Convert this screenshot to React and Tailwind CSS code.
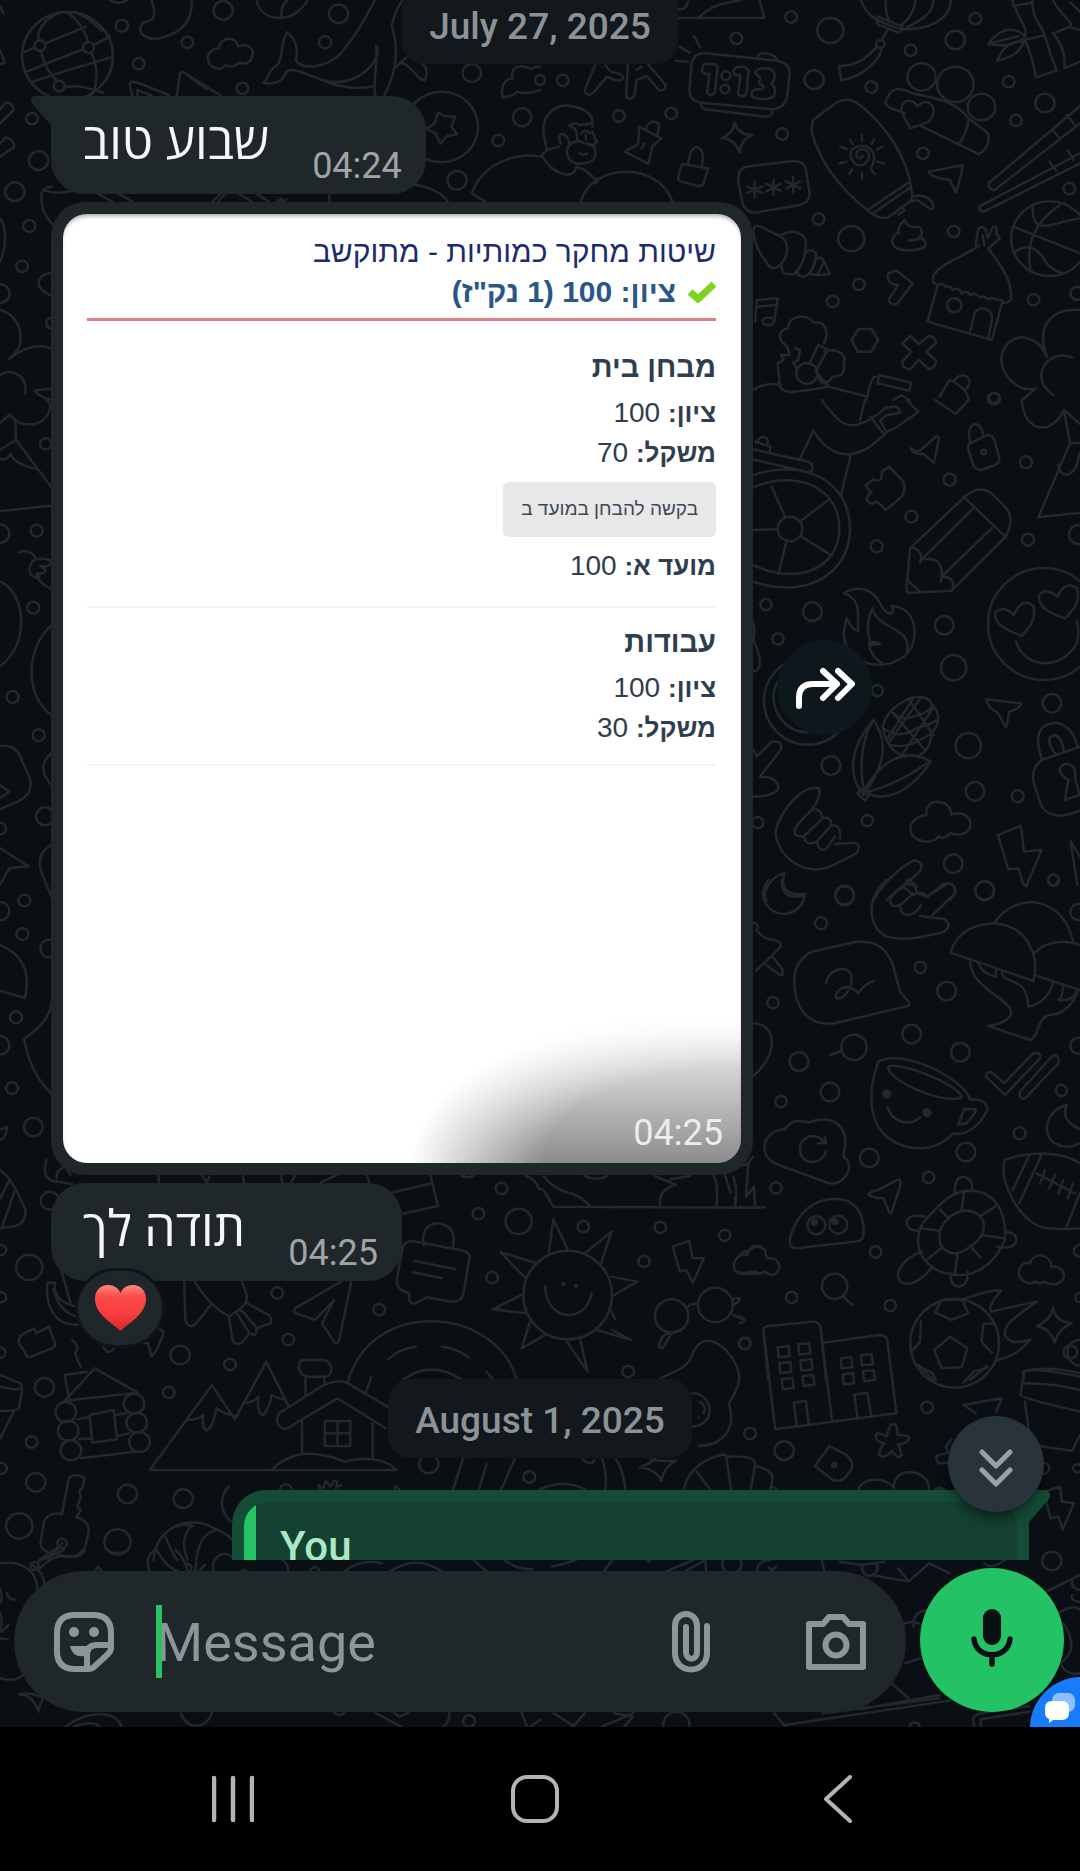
const DOODLES = [
  {
    at: 'scale(.3444 .3333)',
    circles: [
      [196, 168, 132], [116, 137, 16], [257, 143, 16], [172, 258, 16], [354, 77, 18], [403, 191, 17], [544, 127, 17], [648, 31, 28],
      [944, 127, 18], [983, 42, 28], [704, 265, 17], [1370, 219, 27], [1282, 381, 106], [1516, 352, 27], [1447, 421, 17], [1327, 541, 28],
      [93, 356, 17], [112, 482, 28], [43, 575, 28], [85, 678, 18], [64, 799, 17], [0, 881, 28], [150, 969, 16],
    ],
    d: 'M72 155L102 142M132 130L250 80M78 215L160 180L242 148M272 135L318 110M96 245L205 208L322 172M112 122C105 85 140 50 175 38M118 152C128 190 140 220 165 243M188 262C240 250 280 275 300 278M255 128C250 90 220 55 195 36M265 158C290 210 280 270 262 290M215 36C260 50 280 80 296 92M440 0C460 60 440 62 415 68C390 100 430 130 480 110C540 90 560 50 556 0M320 0Q345 18 370 0M745 0C755 60 830 70 870 30Q890 8 893 0M818 50Q812 20 835 0M625 204C590 190 600 145 635 145C640 110 685 105 692 140C720 125 740 150 732 170C725 195 705 192 695 188C680 200 665 202 655 195Q640 212 625 204M765 248C785 235 775 210 800 200C825 180 810 140 833 97C865 120 865 165 858 180C880 215 950 200 990 160C1030 110 1060 60 1088 0M765 248C800 255 820 245 828 222C840 195 880 220 935 240C980 255 1050 245 1090 180Q1102 150 1092 138M935 240C980 262 1040 270 1085 258M1092 140C1100 190 1080 240 1090 288M1168 0Q1140 50 1138 80C1160 150 1150 220 1115 288M1145 205L1180 172M1165 190C1195 190 1205 240 1234 240C1245 210 1235 190 1208 180M385 288C370 240 375 240 410 252L490 285M400 288L398 270L440 286M513 288L522 222Q530 210 545 225L640 286M540 222L600 268M1272 338L1290 348L1322 350L1310 380L1328 402L1298 408L1278 432L1265 400L1238 386L1262 370ZM0 18L10 40M0 150L14 188L0 192M0 330L15 308Q35 305 40 330L0 370M0 430L18 412Q42 420 42 440L0 470M150 560C110 560 120 600 125 630Q138 660 158 678M130 572Q170 585 220 570M285 582L325 604M345 582L385 604M695 582L730 604M745 582L780 604M618 604L640 582M635 604L652 582M805 600L812 606L818 596L824 606L832 598M955 582L957 604M1205 555C1250 560 1290 585 1300 605M1370 580C1400 490 1500 455 1568 470M1370 580L1408 604M1460 292C1450 255 1470 235 1490 235C1475 200 1520 190 1540 208C1550 200 1568 200 1568 200M1460 292Q1490 290 1500 275Q1530 285 1568 270M0 655C20 680 20 740 0 785M150 818C100 825 100 870 148 885M0 930C60 945 70 1020 52 1048Q40 1065 25 1078M35 1072Q90 1025 150 1045M0 1125Q30 1105 60 1130Q80 1155 72 1180M100 1172L150 1166M100 1172Q120 1195 150 1200',
  },
  {
    at: 'translate(540 0) scale(.3444 .3333)',
    circles: [
      [729, 51, 17], [843, 91, 38], [570, 115, 17], [66, 241, 17], [229, 348, 17], [381, 340, 17], [796, 239, 28], [703, 402, 17], [962, 261, 17],
      [1076, 151, 17], [1206, 120, 28], [1264, 56, 17], [1361, 245, 17], [1466, 309, 28], [1382, 361, 17], [1112, 460, 17], [1108, 231, 41], [1206, 253, 53],
      [1282, 321, 40], [1537, 566, 17], [1480, 716, 112], [809, 657, 17], [904, 716, 38], [1201, 694, 17], [926, 853, 17],
      [850, 904, 17], [1433, 899, 17], [1203, 916, 21], [775, 1120, 31], [540, 227, 13], [537, 267, 13], [988, 132, 12], [0, 240, 14], [1318, 1194, 14], [1560, 880, 20],
    ],
    d: 'M402 54L652 54L637 0M460 54C500 10 540 10 585 0M402 28Q425 30 430 5M395 182L430 185M405 140L435 158M447 108L465 142M480 160L688 182Q725 188 725 220L718 290Q710 325 675 328L465 308Q432 300 434 270L440 190Q448 158 480 160M630 172Q635 155 665 162Q688 168 686 182M470 308Q465 325 480 328L655 350Q675 350 676 330M470 210Q472 188 490 192L505 192Q518 195 515 210L508 275Q500 292 485 280L492 222Q475 225 470 210M562 215Q565 196 590 200Q608 205 605 220L600 278Q590 298 575 282L582 225Q565 230 562 215M625 220C630 200 675 200 680 220Q685 240 672 250Q690 270 678 290Q650 305 615 290Q610 272 628 268L645 268Q652 262 645 255Q630 250 640 240Q640 230 625 220M160 194L130 270Q135 295 155 278L195 230Q230 250 242 235Q240 220 205 215L190 196M255 194L250 290Q260 305 275 285L280 240L310 228L345 270Q365 275 365 255L315 195M280 210L295 200M10 400C5 340 50 310 90 318Q160 330 152 380M10 400L20 450L5 465C20 500 60 530 90 522Q105 515 105 500M20 450L55 440M60 432C45 390 80 395 85 430L108 425M85 378Q110 380 108 425M85 378Q95 365 115 375L152 370M120 400Q130 385 145 400M133 405L133 418M152 395L165 425Q155 440 140 435M78 455C80 425 110 418 130 430C165 430 165 460 155 480C120 500 80 495 78 455M115 460Q125 468 137 460M105 500L130 510L168 543M168 543L160 550M118 605C150 490 340 480 385 605M307 388C315 355 350 360 345 385L340 408M288 380L352 415L326 440L315 492L247 455L285 432ZM295 445L304 430M412 492L488 505L475 550Q470 560 455 557L410 545Q398 540 402 530ZM430 494Q435 440 458 442Q480 450 470 500M565 367Q575 405 617 405Q585 415 580 458Q565 415 528 415Q562 400 565 367M600 500L735 483Q768 482 772 510L783 580Q782 608 755 615L625 638Q595 635 588 610L575 540Q575 505 600 500M623 545L623 592M602 560L645 578M602 578L645 560M678 540L678 585M658 552L698 572M658 574L698 552M735 532L735 577M714 544L755 565M714 566L755 544M793 360L860 308Q890 290 920 308C1000 370 1070 470 1080 580Q1085 600 1060 615L1010 652Q990 660 960 638C850 550 810 470 790 400Q788 375 793 360M955 628L1070 548M968 640L1078 560M1080 590Q1125 580 1140 610Q1145 635 1130 625L1095 600L1078 604M1030 640L1050 620L1058 632L1040 645M935 405L935 423M935 518L935 535M872 440L890 447M900 420L908 432M970 418L963 432M995 440L978 448M870 490L890 485M980 485L998 490M898 522L906 508M972 522L962 508M937 468Q930 480 920 470Q915 450 935 448Q960 450 955 475Q945 500 920 495Q895 475 905 450Q930 428 958 445Q980 470 962 500M932 0C950 60 1000 70 1050 88C1130 90 1190 60 1193 0M982 50Q970 65 985 75L1040 98Q1055 95 1052 80L982 50M1015 65Q1000 30 1005 0M1048 78Q1090 40 1090 0M1065 82Q1145 45 1142 0M1008 92L992 122M868 198Q930 200 978 140M868 198L875 240C930 235 985 185 993 145M1060 340C1040 330 1000 325 1003 305C1020 260 1040 260 1080 280C1150 295 1200 300 1245 355L1300 400Q1310 440 1275 463L1110 380M1245 355Q1240 400 1218 430M1075 385C1060 350 1035 330 1060 305Q1085 295 1095 320Q1125 290 1143 325C1145 370 1115 370 1075 385M1375 18L1372 0M1375 18L1428 8L1430 0M1378 18C1400 80 1420 80 1405 120L1465 106C1455 70 1430 60 1430 10M1410 125Q1430 170 1440 232L1500 212Q1480 160 1465 106M1490 0C1510 50 1550 60 1540 80L1490 100M1490 100Q1530 150 1522 205L1568 185M1405 105C1370 75 1330 90 1302 132Q1360 145 1405 115M1310 130L1390 108M1405 125Q1350 120 1328 182Q1390 170 1405 125M1540 8L1568 35M1568 90L1540 82M1568 318L1302 550Q1302 570 1320 570L1568 370M1568 460L1275 620Q1275 640 1295 632L1568 490M1488 388L1508 415M1530 345L1555 378M1480 485L1498 512M1532 452L1550 480M1430 620C1430 680 1450 690 1520 665L1568 655M1375 680L1568 760M1510 615C1430 670 1410 740 1425 815M1380 755Q1430 720 1465 780Q1480 810 1520 820M1128 515L1228 495Q1225 520 1208 578L1190 540Q1140 535 1128 515M620 690Q622 670 645 682L700 710C750 750 680 840 660 790Q620 740 620 690M700 705C750 680 780 710 770 745C770 790 740 830 725 822Q700 825 702 800M775 755Q790 745 802 760C800 800 780 830 765 830Q750 830 745 815M805 775Q815 768 825 785L805 825L785 822M825 785L842 822L805 825M1060 660Q1065 685 1095 680C1115 685 1110 710 1100 712Q1125 720 1118 740Q1080 760 1035 745C1010 725 1030 700 1042 700Q1035 680 1060 660M1070 722L1098 718M1010 835Q1005 815 1035 812L1082 850L1038 910Q1020 920 1012 900L1040 855Q1015 855 1010 835M1265 735L1272 690Q1280 672 1295 690L1300 715L1315 682Q1330 672 1325 700L1335 715L1302 745M1290 735L1285 705M1275 737C1230 770 1165 790 1143 825Q1135 850 1155 855Q1170 845 1175 860Q1190 855 1200 870Q1215 860 1225 880Q1240 870 1250 885Q1265 875 1275 892Q1290 885 1300 898Q1315 890 1325 900Q1340 895 1345 908Q1365 910 1368 895C1370 840 1340 800 1302 745M1155 855L1125 965L1312 1020L1342 908M1248 998L1262 940Q1275 918 1300 930Q1315 940 1312 960L1302 1012M630 900L690 895L682 950Q682 975 665 975Q640 975 648 958Q655 950 675 955M630 920L688 915M630 900L625 965M905 1020L925 987L962 987L982 1020L962 1055L922 1055ZM1052 1030L1075 1008L1100 1032L1128 1008Q1150 1010 1150 1028L1122 1056L1150 1082Q1148 1105 1130 1108L1100 1080L1075 1108Q1050 1105 1052 1085L1078 1056ZM718 1040C680 1010 700 990 720 985C720 950 770 935 795 968C830 960 840 1000 825 1030M825 1055C870 1040 890 1070 882 1090Q890 1130 850 1130C820 1170 810 1140 808 1125M718 1040L725 1065L700 1065L708 1080L690 1090L695 1140Q690 1180 740 1175Q790 1170 840 1160L800 1115L835 1050L808 1035L785 1085M740 1045L755 1050L750 1080L735 1088L745 1105M620 1168Q660 1145 700 1155M830 1158L950 1190M985 1125L1078 1148L1072 1172L980 1150ZM975 1130Q960 1130 948 1200M1025 1200L1050 1185L1072 1200M1160 1190L1190 1140Q1240 1165 1245 1200M1200 1145C1220 1115 1250 1125 1247 1150Q1240 1170 1230 1168M1400 1165C1310 1120 1330 1015 1400 1012Q1440 1020 1455 1040L1472 1070C1440 980 1480 925 1568 930M1400 1165Q1430 1170 1440 1165L1400 1200M1545 1072C1500 1055 1460 1080 1455 1125Q1455 1160 1490 1185',
  },
  {
    at: 'translate(740 400) scale(.3333)',
    circles: [
      [858, 187, 18], [629, 239, 18], [514, 350, 18], [410, 439, 18], [864, 419, 18], [613, 676, 28], [641, 803, 38], [217, 635, 28], [78, 614, 17], [114, 717, 17],
      [412, 872, 17], [685, 1037, 38], [705, 1174, 28], [833, 1189, 18], [936, 910, 28], [273, 1097, 28], [382, 1262, 17], [640, 1391, 28], [734, 1472, 28], [941, 1441, 17],
      [314, 1488, 28], [53, 1268, 17], [912, 672, 168], [150, 387, 37], [203, 903, 131], [1015, 404, 28], [216, 803, 6], [278, 964, 6], [731, 156, 7], [762, -4, 18],
    ],
    d: 'M38 226C200 170 330 250 330 387C330 520 200 600 38 545M38 262C180 205 300 270 298 387C298 500 180 560 38 495M95 260L136 352M265 300L183 362M38 390L112 388M140 423L115 522M182 408L275 467M38 148L205 185Q225 195 212 218L38 178M45 125L92 140L88 155M52 128Q55 108 75 112Q88 118 82 136M178 180L220 92C260 160 320 185 390 140L438 100M332 165L302 290M245 0C290 60 310 80 350 75Q400 60 440 20M375 0L360 60M390 50L430 100M440 25Q475 10 480 38L440 45L420 62L440 95L465 85L535 35L500 0M585 0L648 42L685 0M512 145Q520 155 540 152L590 108Q600 110 595 125L582 188L550 162Q520 165 512 145M690 125Q680 75 708 72Q728 80 730 108M690 130L740 105Q760 105 765 125L778 175Q778 190 765 195L725 210Q705 208 700 195L684 145Q683 135 690 130M376 258L400 238Q425 250 425 225L425 215L448 200L490 245Q500 270 485 290L438 330L412 305Q385 320 380 295Q385 280 395 278ZM680 285Q720 255 755 280L800 325Q825 365 795 412L635 572L505 578Q498 575 500 560L510 445ZM670 290L798 412M515 442Q545 450 545 478L700 325M552 478Q610 470 605 530L755 385M545 478L540 488M605 530L603 545M605 530Q640 530 640 555Q638 570 635 572M502 540L540 575M845 0C850 70 890 90 925 80Q955 65 972 30L1020 72M972 30L990 130L895 352L1020 338M990 130L1020 128M955 195C960 240 1010 235 1018 160M845 708C800 690 755 670 768 635Q790 615 822 645Q845 590 880 618C890 660 870 680 845 708M975 655C930 640 890 620 898 585Q915 560 952 590Q975 540 1012 565C1022 610 1000 630 975 655M828 725C850 800 960 820 1010 730Q1020 700 1010 662M312 580C350 555 400 565 420 610C440 650 470 650 455 618C540 620 540 740 490 770C440 810 350 800 320 740C300 700 320 670 320 655Q340 695 355 692C350 650 370 600 312 580M398 625C380 660 380 700 395 735L420 732Q415 725 388 725C385 760 410 780 430 792M398 625C410 690 520 680 500 755M38 665Q48 690 40 720Q70 785 55 805Q50 820 38 810M165 810C100 820 80 900 125 960Q165 1010 245 992M195 895L215 940Q230 955 240 935L215 880M400 960C330 1040 320 1130 372 1185C430 1100 450 1030 400 960M400 960C360 1020 360 1120 372 1170M372 1175C420 1080 500 1040 572 1085C510 1180 430 1210 372 1175M385 1175Q480 1150 560 1090M352 1180L372 1160L390 1180L375 1202ZM428 980C440 930 480 910 508 895Q560 880 578 915C600 940 600 970 575 1000Q570 1050 540 1065M428 980Q440 1050 485 1065M455 935Q490 965 520 950Q560 940 575 920M430 985Q480 1020 530 985Q570 975 590 960M450 1035Q500 1045 540 1020Q560 1010 575 1000M460 940L555 1050M508 900L580 1005M440 1020L520 895M490 1060L578 925M445 1030L545 890',
  },
  {
    at: 'translate(740 400) scale(.3333) ',
    circles: [],
    d: 'M38 1048Q45 1055 50 1070L95 1025Q130 1020 122 1050L60 1130Q115 1130 115 1165Q105 1190 38 1190M738 898L845 910Q840 925 808 935Q800 980 798 982L775 940Q745 925 738 898M905 1075C880 1000 900 970 950 968Q1000 980 1012 1040M945 1060Q910 1010 945 1005Q965 1010 972 1055M1020 1040L905 1080Q870 1110 882 1150L905 1220Q930 1255 980 1245L1020 1232M975 1200L985 1140Q940 1110 975 1092Q1010 1090 1005 1130L1018 1185ZM237 1165C180 1150 100 1260 108 1310C120 1370 190 1430 270 1400L350 1360Q365 1330 340 1328L285 1332M237 1165Q245 1190 215 1230M215 1230Q240 1220 248 1255Q270 1245 275 1275Q305 1275 300 1315M215 1230C170 1270 140 1310 190 1310L248 1255M190 1310Q200 1340 230 1325L275 1275M230 1325Q240 1360 260 1345L285 1310M560 1245C500 1250 490 1320 560 1325Q585 1325 595 1310Q615 1320 630 1300C700 1320 710 1250 660 1240Q640 1240 635 1245C630 1190 550 1195 560 1245M774 1305L843 1278L852 1355L905 1350L860 1455Q855 1462 850 1450L835 1405L805 1408ZM992 1325L1020 1370M992 1325L1012 1455M133 1420C90 1430 65 1480 80 1500M133 1420Q115 1490 195 1482L190 1500M400 1500Q450 1420 520 1382Q560 1385 535 1420L490 1455M490 1455Q530 1445 530 1480L560 1490L625 1450Q650 1455 645 1480L630 1500M440 1500L490 1455',
  },
  {
    at: 'translate(740 880) scale(.3333)',
    circles: [
      [314, 45, 28], [734, 32, 28], [243, 130, 18], [541, 262, 17], [620, 333, 28], [99, 368, 17], [515, 462, 28], [342, 502, 38], [177, 545, 28], [661, 517, 28],
      [270, 636, 28], [123, 665, 17], [964, 631, 17], [839, 760, 18], [678, 816, 28], [388, 834, 28], [108, 924, 17], [566, 892, 17], [229, 1036, 27], [295, 1034, 27],
      [407, 1116, 17], [155, 1252, 17], [284, 1219, 38], [451, 1277, 17], [15, 1390, 17], [644, 1390, 133], [1015, 96, 24], [1015, 497, 24], [1020, 1112, 18], [1020, 1418, 38], [1020, 1253, 14],
    ],
    dots: [[440, 642, 13], [561, 698, 13], [223, 1027, 10], [285, 1025, 10]],
    d: 'M85 0C50 50 80 100 135 102Q185 95 195 45Q125 65 125 0M440 0C380 50 380 140 440 170C500 185 550 170 605 158Q640 140 615 118L540 108M578 105L645 40Q648 5 610 12L562 50Q545 30 520 45L490 20M490 20Q450 45 450 65Q455 85 480 75L520 40M480 75Q480 105 505 105Q530 100 543 75M500 0Q520 5 530 20M845 0Q850 20 860 18L865 0M925 0Q930 18 945 18L955 0M215 215L350 185C430 180 450 230 460 260L480 335L508 368Q512 378 495 380L285 430C200 440 160 380 163 290Q170 240 215 215M258 310C265 260 340 250 335 300C330 350 285 370 288 345C295 320 330 310 355 340Q375 310 400 303M38 128Q60 130 50 150Q70 180 105 180Q130 190 118 205L48 272M75 252L120 285Q135 285 125 265L98 232M38 430C110 430 120 520 38 590M272 525L305 513M632 218C660 110 830 100 870 200Q895 240 880 303ZM762 130C830 30 970 50 1000 185M885 218C920 180 980 180 1020 195M888 287L1020 330M690 243C690 330 830 360 812 405Q800 430 745 438L870 480C900 470 890 410 930 405Q990 400 1015 330M715 250Q730 285 768 290L768 265M785 275C790 320 860 280 865 380Q920 370 940 308M968 318Q970 350 955 360Q1000 365 1012 330M738 590Q740 570 760 580L792 610L880 520Q905 515 900 535L795 645ZM840 635Q835 650 848 656Q860 655 865 645L955 550Q960 525 940 525ZM415 545Q470 515 590 570Q680 620 690 658Q740 655 742 690Q700 770 640 760C560 840 450 800 415 740C380 680 395 600 415 545M445 560C480 540 690 630 660 655C600 670 440 600 445 560M672 688L708 688Q710 695 680 730L655 735ZM443 680C455 730 510 740 540 712M135 748C60 750 50 840 125 858L260 908C300 920 340 880 322 840Q305 830 312 815C330 740 280 700 205 728Q160 710 135 748M258 815C245 860 180 855 180 808C180 765 230 755 255 788M255 772L258 790L235 790M980 675C920 690 900 760 945 790Q980 810 1020 790M980 675Q960 720 1020 748M795 840C860 815 960 810 1020 850M795 840C770 900 850 1050 930 1045Q980 1050 1020 1045M868 826L818 930M905 824L838 970M1020 940L980 1040M890 880L1005 940M915 870L900 912M945 885L928 925M970 900L955 940M998 912L983 955M385 943Q390 935 415 930L475 898Q485 900 480 920L455 998Q450 1005 445 990L430 955Q395 955 385 943M0 860L25 850L18 950L42 920L45 982M0 982L75 982M25 850L38 830M150 1075C170 1000 220 950 300 958C360 965 375 1020 370 1070Q365 1085 345 1085L170 1105Q145 1105 150 1075M545 1035C620 940 660 930 700 932C780 940 800 1020 795 1080C760 1160 700 1190 650 1185C570 1180 510 1120 545 1035M630 1010Q670 980 710 1000C750 1030 730 1075 690 1100Q640 1140 605 1100C590 1070 600 1035 630 1010M672 935L665 990M600 988L628 1018M765 980L720 1010M540 1045L598 1052M725 1065L790 1075M560 1140L605 1103M645 1180L653 1120M722 1132L690 1098M645 945Q640 890 672 890Q705 900 693 935M555 1010Q500 1000 500 1030Q505 1055 540 1052M795 1055Q835 1060 828 1085Q820 1110 770 1100M545 1115C480 1140 455 1190 490 1210Q530 1220 578 1160M632 1180Q630 1220 658 1220Q685 1215 683 1175M0 1125Q15 1110 25 1115Q40 1085 75 1110L80 1135C120 1130 130 1170 100 1185Q85 1185 75 1175Q60 1185 45 1175Q20 1190 0 1175M855 1205C820 1190 840 1140 870 1150C880 1115 930 1120 935 1160C975 1155 985 1200 950 1212Q925 1215 915 1205Q900 1215 885 1205Q870 1215 855 1205M310 1250L337 1275M585 1298L605 1260Q640 1255 668 1262L685 1300L635 1320ZM630 1370L682 1405L665 1462L605 1465L583 1410ZM543 1325L540 1385L515 1415M762 1330L730 1332L725 1385L755 1418M665 1258C700 1250 740 1230 783 1232Q740 1280 755 1295Q840 1275 890 1265C830 1310 790 1330 795 1365Q810 1400 872 1378Q830 1430 770 1440M535 1455L580 1500M742 1458L690 1500M940 1283Q945 1325 995 1330Q955 1345 945 1388Q930 1345 890 1338Q930 1325 940 1283M850 1475Q920 1455 1020 1480M850 1475L850 1500M0 1310Q20 1320 10 1325L0 1330M70 1350L85 1500M70 1350Q70 1340 85 1338L220 1325Q238 1325 242 1345L258 1500',
  },
  {
    at: 'translate(0 1160) scale(.3444 .3333)',
    circles: [
      [85, 322, 38], [145, 122, 27], [1456, 85, 17], [1389, 161, 17], [1506, 184, 38], [1429, 353, 17], [1101, 449, 17], [805, 399, 17], [837, 539, 17], [523, 585, 28],
      [668, 613, 17], [490, 697, 17], [129, 682, 28], [92, 846, 17], [104, 967, 28], [370, 1002, 28], [532, 1016, 28], [56, 1098, 38], [341, 1146, 38], [1245, 912, 28],
      [1537, 951, 17], [191, 756, 30], [198, 812, 30], [206, 871, 30], [389, 731, 30], [397, 788, 30], [405, 846, 30], [180, 1150, 14], [3, 412, 15], [3, 270, 15],
      [3, 925, 17], [0, 578, 16], [830, 990, 17],
    ],
    d: 'M0 30C40 60 60 120 74 150Q75 190 45 198L0 205M25 65L0 115M42 95L8 195M135 0Q120 50 150 62L210 72M190 20Q160 30 165 55M192 22L205 45M460 44L462 68M585 44L600 68L608 50M705 44L708 68M815 44L820 68M845 68L858 45M930 68L980 44M1065 44L1072 68M1135 98L1255 70L1250 44M1255 70L1272 138L1165 162M1230 255C1220 200 1260 180 1290 195Q1325 205 1315 262M1180 248Q1190 240 1210 245L1345 272Q1370 280 1362 300L1345 405Q1335 428 1310 425L1240 412L1205 430Q1185 435 1188 400Q1150 390 1152 360L1165 285Q1168 255 1180 248M1203 302L1320 327M1198 337L1283 354M172 310L205 430M138 368L160 368L158 385Q165 425 215 438M138 368C130 440 160 500 228 494M155 390Q175 460 225 470M535 364L538 480Q550 510 568 492L612 435M565 364Q605 435 665 470L685 455Q725 430 715 400L702 364M665 470L675 540Q685 560 705 545L725 520M718 430L780 465Q800 490 770 495L745 505M685 455Q690 445 705 455L742 500Q748 515 740 525L725 520ZM1020 365L985 540Q980 555 970 545L935 490L970 420L915 480L860 460Q845 450 865 440L990 365M55 550Q52 530 70 520L100 505L105 520L142 500L160 550Q162 560 150 565L85 592Q75 590 72 575ZM210 540Q235 560 218 580Q225 600 235 622M300 560Q315 590 332 562M418 550L430 550L440 590Q460 570 475 515L465 508M188 645L252 635M188 645L200 715M188 722L275 625L400 698ZM260 765L330 750L340 838L268 848ZM225 778L258 772M335 765L368 760M230 838L265 835M340 828L375 820M235 895L390 875M435 930L615 676L682 778L773 605L838 738M435 930L1150 930M545 780Q575 780 590 765Q585 805 600 812Q620 800 628 745Q645 760 680 768M715 728Q740 725 750 710Q745 765 765 765Q785 740 788 705Q805 715 825 718M810 760C790 800 830 820 850 795L980 715L1120 805M810 760L940 675Q985 655 1010 670L1125 740M878 600L945 600C975 620 960 650 945 650L890 650C860 640 865 605 878 600M887 652L887 705M942 652L942 675M877 785L877 880M1082 790L1082 892M943 783L1017 783L1017 858L943 858ZM943 820L1017 820M980 783L980 858M790 928C860 860 940 880 1000 905Q1100 880 1150 928M1010 665C1080 410 1440 440 1500 658M1172 658Q1250 600 1340 658M1127 598Q1160 565 1208 560M1283 560Q1330 565 1360 592M1063 695L1078 652M1412 635L1430 655M0 645L60 670Q70 690 40 688L0 680M65 685L55 745Q50 755 0 752M40 755L0 835M200 955Q220 935 245 955L240 985Q225 990 235 1010L228 1030Q220 1040 235 1050L222 1072Q260 1085 258 1115L245 1170Q235 1195 200 1190L145 1180Q115 1170 118 1145L128 1085Q140 1055 180 1062ZM180 1150L140 1200M165 1165L115 1200M665 978C630 1020 645 1060 670 1085M445 1200C460 1080 570 1070 620 1105Q660 1120 674 1140M510 1100Q540 1090 560 1098M480 1130Q500 1180 515 1200M555 1098Q520 1140 545 1200M625 1112Q580 1120 570 1200M930 990L925 975L940 985L945 962L960 980L970 962L980 965L975 985L990 975M1315 990L1345 895M1455 990L1495 895M1390 990L1413 912M1145 990L1150 978L1160 990M1453 448L1430 448',
  },
  {
    at: 'translate(540 1330) scale(.3444 .3333)',
    circles: [[594, 41, 17], [256, 125, 17], [610, 310, 17], [1124, 232, 17], [709, 362, 28], [1486, 693, 28], [557, 703, 28], [854, 405, 6], [1462, 415, 17], [1560, 415, 12], [1540, 66, 20], [396, 1184, 38], [1088, 1192, 15], [460, 262, 1]],
    d: 'M115 20L138 125L78 35M165 0L265 30L210 0M345 50Q350 15 375 10L410 0M345 50Q355 62 365 40L380 12M350 145C400 120 430 110 440 80C460 20 500 20 540 60C600 130 580 170 548 220C570 290 540 345 460 348M440 190C510 190 510 290 440 290M465 215Q485 230 475 250M650 15L683 298L1035 250L1008 30Q1005 15 985 15L822 38M815 0L848 272M690 52L722 48L725 78L693 82ZM750 43L782 40L785 70L753 74ZM695 100L727 96L730 126L698 130ZM756 91L788 88L791 118L759 122ZM702 148L733 144L737 174L705 178ZM762 138L793 135L797 164L765 168ZM873 85L904 82L907 112L876 115ZM932 76L963 73L967 103L935 106ZM879 133L909 130L912 160L882 163ZM938 124L969 121L972 150L941 154ZM737 218L772 212L780 280M737 218L745 285M913 194L950 188L962 258M913 194L922 265M1098 108L1140 130L1150 152M1298 112L1260 125L1230 158M1405 130Q1400 105 1568 140M1405 130L1395 195Q1400 205 1568 245M1405 160Q1490 160 1568 180M1408 215L1425 345L1545 362L1568 315M1230 225L1340 205L1325 245M1230 225L1265 250M975 320Q975 300 1005 320L1018 285Q1040 275 1038 315Q1080 315 1070 330Q1055 345 1040 342L1050 375Q1040 392 1022 362Q1000 390 985 375Q985 355 1000 340Q975 335 975 320M1195 328L1178 350L1185 368L1150 378L1155 400L1185 398M840 348L890 375Q920 405 895 430Q880 460 850 450L798 408ZM290 412Q340 390 335 385M320 388Q350 395 395 392Q360 410 352 453Q340 420 290 412M180 385Q195 430 190 480M220 385Q245 430 248 480M125 388Q145 410 158 390M0 478Q70 445 135 480M418 480C430 400 520 370 540 375L555 480M455 425L495 480M540 380Q620 375 625 400L612 480M625 408Q680 420 675 450L668 480M675 470L690 480M925 480C930 440 1010 440 1028 475C1020 410 1130 410 1130 480M1148 478Q1160 470 1175 480M1463 485L1510 470L1515 515L1550 520L1518 598L1505 560L1482 565ZM35 710Q75 700 105 690M185 725L210 690M365 725L445 690M420 725L480 690L482 725M310 690L318 695M630 725Q630 690 670 690M665 712L675 722L685 710M818 690L826 725M870 695L935 705L1000 695M935 705Q935 745 965 735Q990 720 975 700M965 735L1070 755L1130 700L1190 730M1040 715L1068 752M1290 700Q1310 720 1350 690M1470 785L1568 735M1545 750Q1540 775 1568 780M1545 795Q1540 815 1568 815M1505 850Q1550 820 1568 840M1520 880Q1570 960 1510 1000Q1530 1040 1568 1030M1040 890Q1070 870 1100 880M1085 890Q1080 850 1120 840M1060 1000L1105 985M1020 1060L1070 1105M930 1138L1160 1095M820 1150L1160 1105M710 1185L1190 1112M680 1150L712 1190M1260 1190L1258 1165Q1260 1155 1280 1150L1420 1128M1280 1190L1280 1168L1420 1145M40 1150L100 1190M130 1150L95 1190M180 1190L270 1150M215 1150L270 1160L245 1190',
  },
  {
    at: 'translate(0 1550) scale(.3444 .3333)',
    circles: [[1362, 513, 17], [914, 66, 14], [100, 48, 12]],
    d: 'M0 40C60 30 110 60 108 120M95 45Q130 70 130 115M110 35L185 0M115 55Q150 20 180 18Q230 25 240 0M0 118Q10 150 0 158M20 130Q25 150 45 148M0 190Q10 215 0 240M0 265L22 268M25 225L5 245M0 385Q50 400 75 365M57 433Q95 425 125 445Q110 480 112 485Q95 435 57 433M190 530C250 480 340 480 352 530M215 530Q270 510 290 530M310 0Q340 20 372 0M435 66C420 30 435 10 450 0M455 0Q480 50 520 66M510 0Q540 30 545 66M540 40Q565 45 550 66M570 40L565 66M595 45L575 66M620 66C610 20 650 0 672 20M705 60L722 66M275 66L285 50L298 66M820 30Q838 40 836 66M1000 66Q1040 25 1110 40M1130 66Q1210 10 1285 66M1375 30L1415 66M1465 30Q1500 60 1545 58M525 489C540 540 600 540 615 489M970 489Q985 500 1000 489M1090 489L1165 530M1145 489L1160 500L1185 489M1305 489Q1305 520 1285 530M1515 489L1530 530M1568 510L1540 530',
  },
  {
    at: 'translate(400 980) scale(.3333)',
    circles: [[550, 740, 17], [781, 742, 17], [732, 844, 17], [974, 766, 17], [503, 945, 133], [946, 975, 52], [815, 1008, 50], [490, 911, 3], [528, 917, 3]],
    d: 'M460 680L1080 683M378 588Q410 600 415 625L430 630L460 680M432 588Q460 630 520 642Q550 655 570 678M553 588Q590 605 622 588M185 588Q205 595 220 588M765 588L828 615Q770 630 782 680M810 598L870 588M940 588Q955 600 950 680M1000 590Q1015 630 1005 680M1005 652L1005 680M975 585L992 638M447 815L460 718L503 808M555 820L635 755L603 850M302 817L410 850M302 817L375 893M635 890L712 905L642 945M278 988L365 945M278 988L378 1000M390 1025L365 1105L440 1062M635 995L645 1018M435 918C440 1030 560 1030 575 940M818 800L868 783L878 835L912 835L878 910L860 870L840 875ZM1080 798Q1045 800 1042 825C1000 815 985 880 1025 882L1050 875Q1065 885 1080 880M865 980Q870 970 892 972M998 965Q1000 950 1018 955Q1020 970 1000 972M1000 1005L1030 1018',
  },
  {
    at: 'translate(0 400) scale(.3333 .5102)',
    // this strip is scaled unevenly, so its rings are ovals in local units
    squash: 0.65,
    circles: [[137, 86, 17], [110, 256, 18], [100, 407, 18], [38, 582, 18], [116, 657, 18], [73, 981, 18], [67, 1047, 18], [48, 1210, 18], [36, 1349, 18], [100, 1425, 28], [135, 816, 27], [148, 1075, 27], [0, 1002, 28], [0, 262, 28], [0, 1265, 28], [0, 840, 18]],
    d: 'M0 45L30 28Q50 50 100 48C150 40 160 10 140 0M46 40L48 78L155 172M48 78L0 98M0 115Q20 120 32 105Q40 125 110 135M0 218L155 207M58 298Q90 292 105 308M155 315Q90 300 88 335C95 350 130 355 115 340Q155 340 120 325Q145 330 155 318M110 340Q115 360 155 370M0 355C80 380 90 480 0 522M155 442C80 480 70 580 155 618M0 678Q50 675 65 705L90 742Q100 770 60 785L0 802M0 755L28 768L0 780M155 692Q105 720 155 755M0 878L85 914L28 918L0 950M155 872Q100 890 130 935L155 975M0 1068C80 1090 90 1130 75 1172L0 1158M155 1178Q150 1220 72 1252Q90 1320 155 1360M0 1430L22 1425Q15 1450 0 1450',
  },
];

function Wallpaper() {
  return (
    <svg
      viewBox="0 0 1080 1727"
      preserveAspectRatio="xMidYMin slice"
      className="absolute inset-0 w-full h-full"
      fill="none"
      stroke="#22282c"
      strokeWidth="2.5"
      strokeLinecap="round"
      strokeLinejoin="round"
      aria-hidden="true"
    >
      {DOODLES.map((g) => (
        <g key={g.at} transform={g.at}>
          <path d={g.d} vectorEffect="non-scaling-stroke" />
          {g.circles.map(([x, y, r]) => (
            <ellipse key={`${x}-${y}`} cx={x} cy={y} rx={r} ry={r * (g.squash || 1)} vectorEffect="non-scaling-stroke" />
          ))}
          {(g.dots || []).map(([x, y, r]) => (
            <circle key={`${x}-${y}`} cx={x} cy={y} r={r} fill="#22282c" />
          ))}
        </g>
      ))}
    </svg>
  );
}

function DatePill({ children }) {
  return (
    <div className="self-center flex items-center h-[79px] px-[27px] pt-1 rounded-[22px] bg-[#12181c] text-[37px] font-medium text-[#8c9397]">
      {children}
    </div>
  );
}

function TextBubble({ text, time, tail, children }) {
  return (
    <div className="relative self-start flex h-[98px] pl-8 pr-6 gap-[43px] rounded-[34px] bg-[#1f272a]">
      {tail && (
        <svg viewBox="0 0 60 40" className="absolute top-0 -left-5 w-[60px] h-10" fill="#1f272a" aria-hidden="true">
          <path d="M4 0H60V40H20V29L1 8Q-2 1 4 0Z" />
        </svg>
      )}
      <p dir="rtl" className="relative pt-[14px] text-[50px] leading-[64px] text-[#f4f6f7]">{text}</p>
      <time className="relative self-end pb-[7px] text-[36px] leading-[42px] text-[#a0a4a6]">{time}</time>
      {children}
    </div>
  );
}

function GradeRow({ label, value }) {
  return (
    <p className="text-[28px] leading-10"><strong className="text-[26px]">{label}:</strong> {value}</p>
  );
}

function GradeCard() {
  return (
    <figure className="relative w-[702px] max-w-full p-3 rounded-[34px] bg-[#1f272a]">
      <div dir="rtl" className="relative h-[949px] pl-6 pr-[25px] pt-[18px] rounded-3xl overflow-hidden bg-white text-[#2f3e4e] font-['Liberation_Sans','Open_Sans',sans-serif] shadow-[inset_0_4px_4px_-2px_rgba(0,0,0,0.35)]">
        <h2 className="text-[30px] leading-10 text-[#1c2a6e]">שיטות מחקר כמותיות - מתוקשב</h2>
        <p className="flex items-center gap-3 pb-[6px] text-[30px] leading-10 font-bold text-[#2a5687] border-b-3 border-[#e08285]">
          <svg viewBox="0 0 28 22" className="w-7 h-[22px]" fill="none" stroke="#7ed321" strokeWidth="7" aria-hidden="true">
            <path d="M2 11L10 18L26 3" />
          </svg>
          <span>ציון: 100 (1 נק"ז)</span>
        </p>

        <section className="pt-[26px] pb-5 border-b-2 border-[#f3f4f5]">
          <h3 className="text-[29px] leading-10 font-bold pb-[6px]">מבחן בית</h3>
          <GradeRow label="ציון" value="100" />
          <GradeRow label="משקל" value="70" />
          <button className="block my-[9px] h-[55px] px-[18px] rounded-md bg-[#e8e8e8] text-[19px] text-[#3c4858]">בקשה להבחן במועד ב</button>
          <GradeRow label="מועד א" value="100" />
        </section>

        <section className="pt-[14px] pb-4 border-b-2 border-[#f3f4f5]">
          <h3 className="text-[29px] leading-10 font-bold pb-[6px]">עבודות</h3>
          <GradeRow label="ציון" value="100" />
          <GradeRow label="משקל" value="30" />
        </section>

        <div className="absolute bottom-0 right-0 w-[360px] h-[150px] bg-linear-to-t from-black/45 to-transparent [mask-image:radial-gradient(ellipse_330px_160px_at_100%_100%,black_60%,transparent_100%)]" />
      </div>
      <time className="absolute bottom-[21px] right-[30px] text-[36px] leading-[42px] text-[#eceded]">04:25</time>
      <button aria-label="Forward" className="absolute top-[438px] -right-[119px] size-[95px] flex items-center justify-center rounded-full bg-[#0d181e]/90">
        <svg viewBox="0 0 60 44" className="w-[60px] h-11" fill="none" stroke="white" strokeWidth="6" strokeLinecap="round" strokeLinejoin="round">
          <path d="M4 40V32Q4 18 18 18H42M28 5L42 18L28 32M43 5L57 18L43 32" />
        </svg>
      </button>
    </figure>
  );
}

function Heart() {
  return (
    <svg viewBox="0 0 51 46" className="w-[51px] h-[46px]" aria-label="Heart">
      <defs>
        <linearGradient id="heart" x1="0" y1="0" x2="0" y2="1">
          <stop offset="0" stopColor="#ff8a80" />
          <stop offset=".25" stopColor="#fb4b49" />
          <stop offset=".6" stopColor="#f93e40" />
          <stop offset="1" stopColor="#d42a2a" />
        </linearGradient>
      </defs>
      <path d="M25.500 46C17 38 0 29 0 14C0 5 6 0 13 0C19 0 23.500 3 25.500 8C27.500 3 32 0 38 0C45 0 51 5 51 14C51 29 34 38 25.500 46Z" fill="url(#heart)" />
    </svg>
  );
}

function Composer() {
  return (
    <form className="relative flex items-end gap-[14px] pt-2 pb-[15px] pl-[14px] pr-4">
      <div className="flex-1 flex items-center h-[141px] px-10 rounded-full bg-[#1f272a] text-[#8d9598]">
        <button type="button" aria-label="Stickers">
          <svg viewBox="0 0 60 60" className="size-[60px]" fill="none" stroke="currentColor" strokeWidth="6" strokeLinejoin="round">
            <path d="M21 3H39Q57 3 57 21V36Q57 39 54 42L40 55Q38 57 34 57H21Q3 57 3 39V21Q3 3 21 3Z" />
            <path d="M56 33H43Q33 33 33 43V56" />
            <circle cx="20" cy="20" r="5" fill="currentColor" stroke="none" />
            <circle cx="40" cy="20" r="5" fill="currentColor" stroke="none" />
            <path d="M16 34H40L32 44Q18 46 16 34Z" fill="currentColor" stroke="none" />
          </svg>
        </button>
        <div className="relative flex-1 flex items-center ml-[42px]">
          <input aria-label="Message" placeholder="Message" className="w-full pt-[3px] bg-transparent text-[54px] leading-[72px] outline-none placeholder:text-[#8d9598]" />
          <span className="absolute left-0 w-[6px] h-[73px] bg-[#25c363]" />
        </div>
        <button type="button" aria-label="Attach" className="mr-24">
          <svg viewBox="0 0 38 62" className="w-[38px] h-[62px]" fill="none" stroke="currentColor" strokeWidth="6" strokeLinecap="round">
            <path d="M35 15V42C35 64 3 64 3 42V15C3 -1 25 -1 25 15V41C25 50 14 50 14 41V16" />
          </svg>
        </button>
        <button type="button" aria-label="Camera">
          <svg viewBox="0 0 60 56" className="w-[60px] h-14" fill="none" stroke="currentColor" strokeWidth="6" strokeLinejoin="round">
            <path d="M3 10H17L23 3H37L43 10H57V53H3Z" />
            <circle cx="30" cy="31" r="10.500" />
          </svg>
        </button>
      </div>
      <button type="button" aria-label="Voice message" className="size-36 pb-1 flex items-center justify-center rounded-full bg-[#23c265]">
        <svg viewBox="0 0 42 60" className="w-[42px] h-[60px]" aria-hidden="true">
          <rect x="12" y="1" width="18" height="36" rx="9" fill="#0a0f13" />
          <path d="M3 31C5 52 37 52 39 31M21 47V56" fill="none" stroke="#0a0f13" strokeWidth="5.500" strokeLinecap="round" />
        </svg>
      </button>
    </form>
  );
}

function NavBar() {
  return (
    <nav className="h-36 grid grid-cols-3 items-center justify-items-center pl-[82px] pr-[91px] bg-black text-[#b4b4b4]">
      <button aria-label="Recent apps">
        <svg viewBox="0 0 42 48" className="w-[42px] h-12" stroke="currentColor" strokeWidth="4.500" strokeLinecap="round">
          <path d="M2 3V45M21 3V45M40 3V45" />
        </svg>
      </button>
      <button aria-label="Home" className="size-12 rounded-[16px] border-4 border-[#b4b4b4]" />
      <button aria-label="Back">
        <svg viewBox="0 0 30 48" className="w-[30px] h-12" fill="none" stroke="currentColor" strokeWidth="4" strokeLinecap="round" strokeLinejoin="round">
          <path d="M27 2L3 24L27 46" />
        </svg>
      </button>
    </nav>
  );
}

export default function App() {
  return (
    <div className="min-h-screen flex flex-col bg-black font-['Roboto','Open_Sans',sans-serif]">
      <main className="relative flex-1 flex flex-col overflow-hidden bg-[#0a0f13]">
        <Wallpaper />

        <div className="relative flex-1 flex flex-col pl-[51px] pr-[51px]">
          <div className="flex flex-col -mt-[15px] mb-8"><DatePill>July 27, 2025</DatePill></div>
          <div className="flex flex-col gap-2">
            <TextBubble text="שבוע טוב" time="04:24" tail />
            <GradeCard />
            <TextBubble text="תודה לך" time="04:25">
              <span className="absolute left-6 top-[85px] w-[90px] h-20 flex items-center justify-center rounded-[40px] bg-[#1f272a] border-3 border-[#0e1417]">
                <Heart />
              </span>
            </TextBubble>
          </div>
          <div className="flex flex-col mt-[98px] mb-8"><DatePill>August 1, 2025</DatePill></div>

          {/* Outgoing reply, cut off by the composer */}
          <div className="relative ml-[181px] h-[70px] pt-3 px-3 rounded-tl-[34px] bg-[#144d37]">
            <svg viewBox="0 0 41 34" className="absolute top-0 -right-[21px] w-[41px] h-[34px]" fill="#144d37" aria-hidden="true">
              <path d="M0 0H36Q43 1 40 9L20 32V34H0Z" />
            </svg>
            <div className="relative flex h-[58px] rounded-t-3xl overflow-hidden bg-[#144132]">
              <span className="w-3 bg-[#25c363]" />
              <p className="pl-6 pt-[21px] text-[42px] leading-[48px] font-medium text-[#a9e8c2]">You</p>
            </div>
          </div>

          <button aria-label="Scroll to bottom" className="absolute right-9 bottom-12 size-24 flex items-center justify-center rounded-full bg-[#28333a] shadow-lg shadow-black/40">
            <svg viewBox="0 0 34 40" className="w-[34px] h-10 mt-2" fill="none" stroke="#99a1a5" strokeWidth="5" strokeLinecap="round" strokeLinejoin="round">
              <path d="M3 4L17 18L31 4M3 22L17 36L31 22" />
            </svg>
          </button>
        </div>

        <Composer />

        <button aria-label="Open chats" className="absolute -right-[52px] -bottom-[52px] size-[102px] rounded-full bg-[#187bfb]">
          <svg viewBox="0 0 30 30" className="absolute left-[15px] top-4 size-[30px]" aria-hidden="true">
            <rect x="7" y="0" width="23" height="19" rx="7" fill="#8fbefd" />
            <path d="M7 8H17Q24 8 24 15V20Q24 27 17 27H8L4 30V26Q0 24 0 20V15Q0 8 7 8Z" fill="white" />
          </svg>
        </button>
      </main>
      <NavBar />
    </div>
  );
}
